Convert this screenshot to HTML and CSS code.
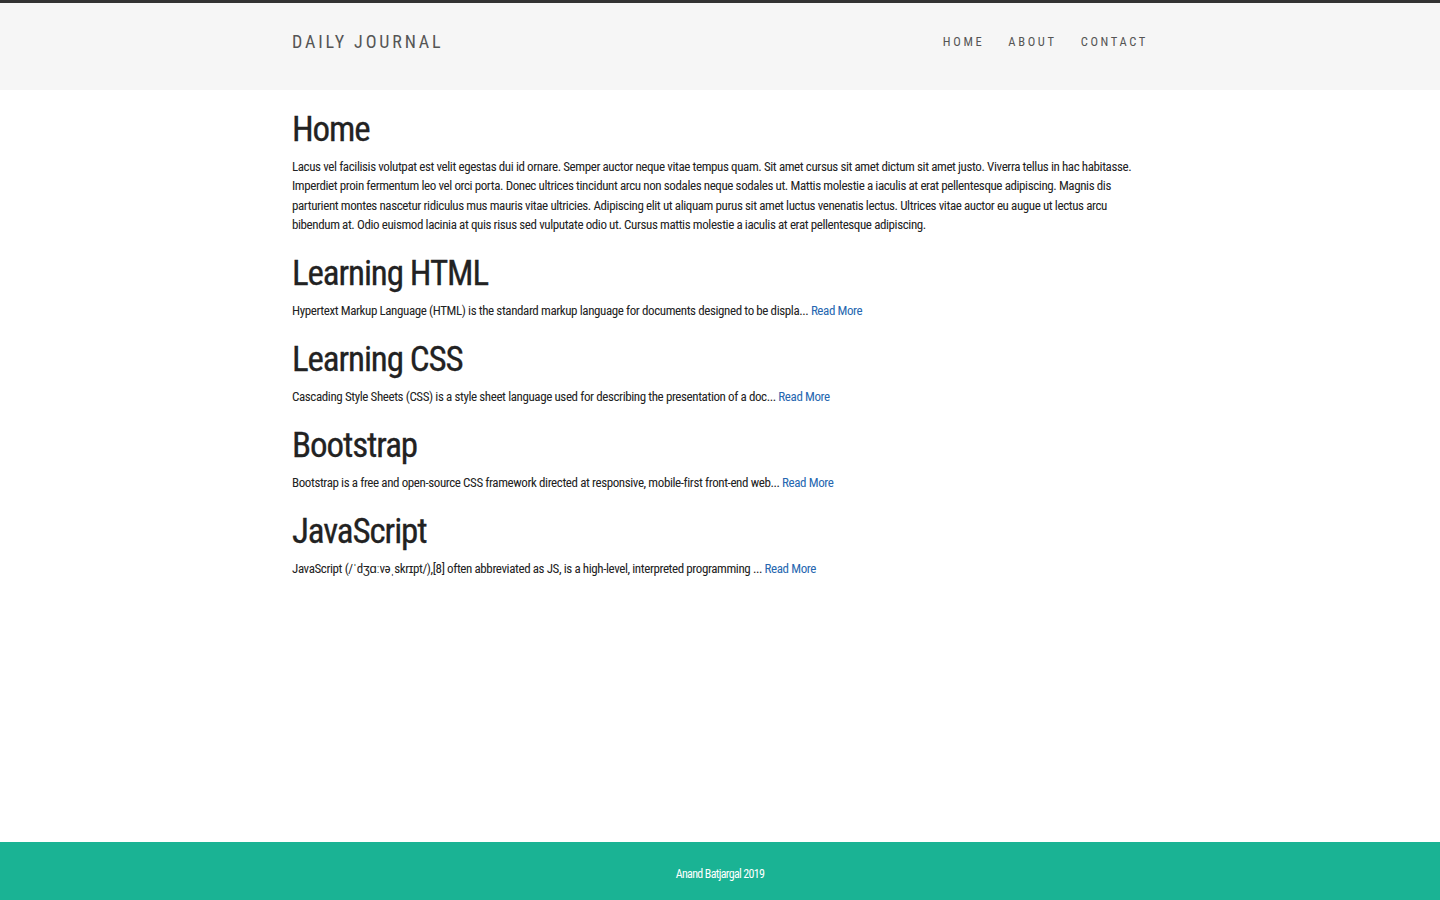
FILE: index.html
```html
<!DOCTYPE html>
<html lang="en">
<head>
<meta charset="utf-8">
<title>Daily Journal</title>
<link rel="stylesheet" href="styles.css">
</head>
<body>
<div class="page">
  <header class="site-header">
    <div class="container header-inner">
      <a class="brand" href="#">DAILY JOURNAL</a>
      <nav class="nav">
        <a href="#">HOME</a>
        <a href="#">ABOUT</a>
        <a href="#">CONTACT</a>
      </nav>
    </div>
  </header>
  <main class="container main">
    <section class="post">
      <h1>Home</h1>
      <p>Lacus vel facilisis volutpat est velit egestas dui id ornare. Semper auctor neque vitae tempus quam. Sit amet cursus sit amet dictum sit amet justo. Viverra tellus in hac habitasse. Imperdiet proin fermentum leo vel orci porta. Donec ultrices tincidunt arcu non sodales neque sodales ut. Mattis molestie a iaculis at erat pellentesque adipiscing. Magnis dis parturient montes nascetur ridiculus mus mauris vitae ultricies. Adipiscing elit ut aliquam purus sit amet luctus venenatis lectus. Ultrices vitae auctor eu augue ut lectus arcu bibendum at. Odio euismod lacinia at quis risus sed vulputate odio ut. Cursus mattis molestie a iaculis at erat pellentesque adipiscing.</p>
    </section>
    <section class="post">
      <h1>Learning HTML</h1>
      <p>Hypertext Markup Language (HTML) is the standard markup language for documents designed to be displa... <a href="#">Read More</a></p>
    </section>
    <section class="post">
      <h1>Learning CSS</h1>
      <p>Cascading Style Sheets (CSS) is a style sheet language used for describing the presentation of a doc... <a href="#">Read More</a></p>
    </section>
    <section class="post">
      <h1>Bootstrap</h1>
      <p>Bootstrap is a free and open-source CSS framework directed at responsive, mobile-first front-end web... <a href="#">Read More</a></p>
    </section>
    <section class="post">
      <h1>JavaScript</h1>
      <p>JavaScript (/ˈdʒɑːvəˌskrɪpt/),[8] often abbreviated as JS, is a high-level, interpreted programming ... <a href="#">Read More</a></p>
    </section>
  </main>
  <footer class="site-footer">
    <p>Anand Batjargal 2019</p>
  </footer>
</div>
</body>
</html>
```
FILE: styles.css
```css
* { box-sizing: border-box; }
html, body { margin: 0; padding: 0; height: 100%; }
body {
  font-family: "Roboto Condensed", "Liberation Sans", Arial, sans-serif;
  color: #222;
  background: #fff;
}
.page {
  min-height: 100vh;
  display: flex;
  flex-direction: column;
}
.container {
  width: 856px;
  margin: 0 auto;
}
.site-header {
  background: #f6f6f6;
  border-top: 3px solid #333;
  height: 90px;
}
.header-inner {
  display: flex;
  justify-content: space-between;
  align-items: center;
  height: 100%;
  padding-bottom: 11px;
}
.brand {
  color: #555;
  text-decoration: none;
  font-size: 18px;
  letter-spacing: 2.85px;
}
.nav {
  display: flex;
  gap: 24px;
}
.nav a {
  color: #555;
  text-decoration: none;
  font-size: 12.5px;
  letter-spacing: 2.65px;
}
.main {
  flex: 1;
  padding-top: 19px;
}
.post h1 {
  font-size: 35px;
  font-weight: 400;
  letter-spacing: -1.1px;
  margin: 0 0 6px;
  line-height: 42px;
  color: #222;
  -webkit-text-stroke: 0.3px #222;
}
.post p {
  font-size: 13px;
  line-height: 19.4px;
  letter-spacing: -0.4px;
  margin: 0 0 18.6px;
  color: #222;
}
.post a {
  color: #2667b0;
  text-decoration: none;
}
.site-footer {
  background: #1ab394;
  height: 58px;
  display: flex;
  align-items: center;
  justify-content: center;
  padding-top: 6px;
}
.site-footer p {
  margin: 0;
  color: #fff;
  font-size: 12px;
  letter-spacing: -0.65px;
}
```
